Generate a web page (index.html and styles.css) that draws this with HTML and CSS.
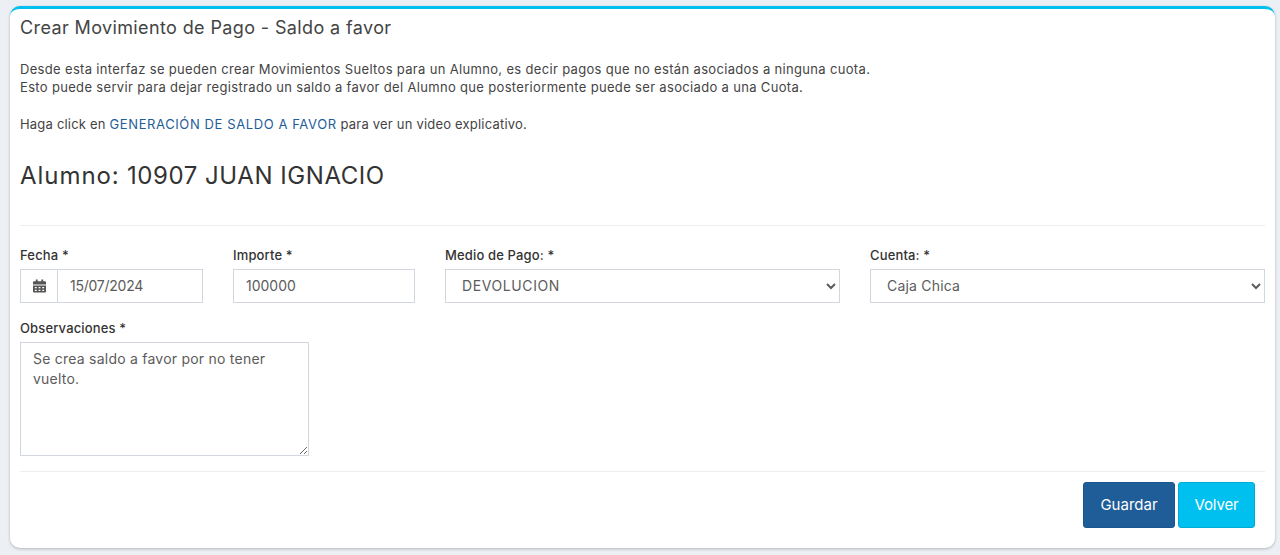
FILE: index.html
```html
<!DOCTYPE html>
<html lang="es">
<head>
<meta charset="utf-8">
<title>Crear Movimiento de Pago</title>
<link rel="stylesheet" href="styles.css">
</head>
<body>
<main class="card">
  <h3 class="card-title">Crear Movimiento de Pago - Saldo a favor</h3>
  <section class="intro">
    <p class="intro-line">Desde esta interfaz se pueden crear Movimientos Sueltos para un Alumno, es decir pagos que no están asociados a ninguna cuota.</p>
    <p class="intro-line">Esto puede servir para dejar registrado un saldo a favor del Alumno que posteriormente puede ser asociado a una Cuota.</p>
    <p class="intro-line intro-gap intro-tight">Haga click en <a class="link" href="#">GENERACIÓN DE SALDO A FAVOR</a> para ver un video explicativo.</p>
  </section>
  <h2 class="student"><span class="student-key">Alumno:</span> 10907 JUAN IGNACIO</h2>
  <hr class="rule rule-top">
  <form class="form">
    <div class="grid">
      <div class="field">
        <label class="label">Fecha *</label>
        <div class="input-group">
          <span class="addon">
            <svg class="cal" viewBox="0 0 14 14" width="13" height="14" aria-hidden="true"><path fill="#555" d="M3 0h2v2h4V0h2v2h2a1 1 0 0 1 1 1v2.500H0V3a1 1 0 0 1 1-1h2zM0 6.500h14V13a1 1 0 0 1-1 1H1a1 1 0 0 1-1-1zM2 8v1.500h2V8zm4 0v1.500h2V8zm4 0v1.500h2V8zM2 11v1.500h2V11zm4 0v1.500h2V11zm4 0v1.500h2V11z"/></svg>
          </span>
          <input class="control control-joined" type="text" value="15/07/2024">
        </div>
      </div>
      <div class="field">
        <label class="label">Importe *</label>
        <input class="control" type="text" value="100000">
      </div>
      <div class="field">
        <label class="label">Medio de Pago: *</label>
        <select class="control select select-upper"><option>DEVOLUCION</option></select>
      </div>
      <div class="field">
        <label class="label">Cuenta: *</label>
        <select class="control select"><option>Caja Chica</option></select>
      </div>
    </div>
    <div class="field field-notes">
      <label class="label">Observaciones *</label>
      <textarea class="control notes">Se crea saldo a favor por no tener vuelto.</textarea>
    </div>
  </form>
  <hr class="rule rule-bottom">
  <div class="actions">
    <button class="btn btn-primary" type="button">Guardar</button>
    <button class="btn btn-info" type="button">Volver</button>
  </div>
</main>
</body>
</html>
```
FILE: styles.css
```css
* { box-sizing: border-box; }
html, body { margin: 0; height: 100%; }
body {
  background: #ecf0f5;
  font-family: "Inter", "Liberation Sans", sans-serif;
  color: #333;
  padding: 6px 5px 0 10px;
  overflow: hidden;
}
.card {
  height: 542px;
  background: #fff;
  border-top: 3px solid #00c0ef;
  border-radius: 10px;
  box-shadow: 0 1px 3px rgba(0, 0, 0, .25);
  padding: 0 10px;
}
.card-title {
  margin: 0;
  font-size: 18px;
  font-weight: 400;
  line-height: 20px;
  padding-top: 9px;
  color: #444;
  letter-spacing: .38px;
}
.intro { margin-top: 22px; }
.intro-line {
  margin: 0;
  font-size: 13px;
  line-height: 18px;
  color: #444;
  letter-spacing: .33px;
}
.intro-gap { margin-top: 19px; }
.intro-tight { letter-spacing: .2px; }
.link { color: #1f5d99; text-decoration: none; letter-spacing: .6px; }
.student {
  margin: 27px 0 0;
  font-size: 24px;
  font-weight: 400;
  line-height: 32px;
  color: #333;
  letter-spacing: .55px;
}
.student-key { letter-spacing: .95px; }
.rule { border: 0; border-top: 1px solid #eee; margin: 0; }
.rule-top { margin-top: 33px; }
.rule-bottom { margin-top: 15px; }
.form { padding-top: 20px; }
.grid {
  display: grid;
  grid-template-columns: 183px 182px 395px 395px;
  column-gap: 30px;
}
.field { display: flex; flex-direction: column; }
.label {
  font-size: 13px;
  font-weight: 500;
  line-height: 18px;
  margin-bottom: 5px;
  color: #333;
  letter-spacing: .15px;
}
.input-group { display: flex; }
.addon {
  flex: 0 0 37px;
  height: 34px;
  display: flex;
  align-items: center;
  justify-content: center;
  border: 1px solid #d2d6de;
  border-right: 0;
}
.control {
  width: 100%;
  height: 34px;
  border: 1px solid #d2d6de;
  border-radius: 0;
  background: #fff;
  padding: 5px 12px 7px;
  font: 400 14px/20px "Inter", "Liberation Sans", sans-serif;
  color: #5c5c5c;
  outline: none;
}
.control-joined { flex: 1; min-width: 0; letter-spacing: -.25px; }
.select { padding-left: 12px; letter-spacing: .2px; }
.select-upper { letter-spacing: .6px; }
.field-notes { margin-top: 16px; width: 289px; }
.notes { height: 114px; padding-top: 6px; resize: vertical; letter-spacing: .23px; }
.actions {
  display: flex;
  justify-content: flex-end;
  gap: 3px;
  padding: 10px 10px 0 0;
}
.btn {
  height: 46px;
  border: 1px solid transparent;
  border-radius: 3px;
  font: 400 15px/20px "Inter", "Liberation Sans", sans-serif;
  color: #fff;
  padding: 0 10px;
}
.btn-primary { background: #1f5d99; border-color: #1c5690; width: 92px; }
.btn-info { background: #00c0ef; border-color: #00acd6; width: 77px; letter-spacing: -.1px; }
```
